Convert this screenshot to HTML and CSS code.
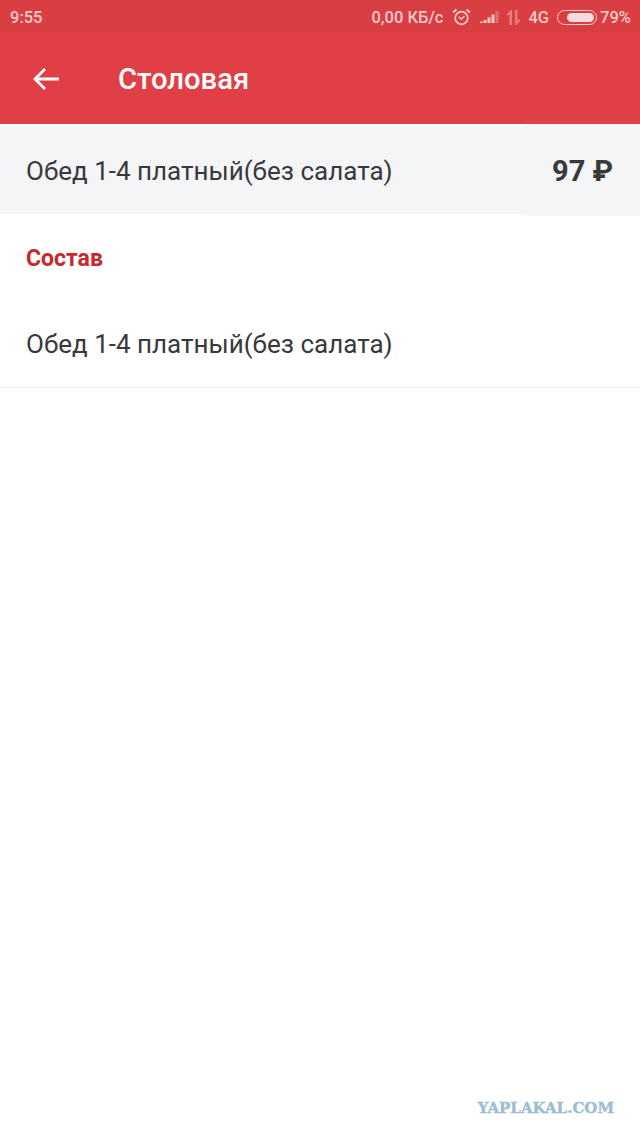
FILE: index.html
```html
<!DOCTYPE html>
<html lang="ru">

<head>
    <meta charset="UTF-8">
    <title>Столовая</title>
    <link rel="stylesheet" href="styles.css">
</head>

<body>

    <div class="status-bar">
        <span class="status-time">9:55</span>
        <div class="status-right">
            <span class="status-text">0,00 КБ/с</span>
            <svg class="icon-alarm" width="19" height="18" viewBox="0 0 19 18" fill="none" stroke="currentColor">
                <circle cx="9.5" cy="10" r="6.300" stroke-width="1.7" />
                <path d="M6.800 8.800 9.500 11 12.500 8" stroke-width="1.500" />
                <path d="M1 4.500 4.500 1.500M18 4.500 14.500 1.500" stroke-width="2" />
            </svg>
            <svg class="icon-signal" width="20" height="14" viewBox="0 0 20 14" fill="currentColor">
                <path d="M0 11.500h2.500V13H0Z" />
                <path d="M3.500 10h3v3h-3Z" />
                <path d="M7.500 7.500h3V13h-3Z" />
                <path d="M11.500 4.500h3V13h-3Z" />
                <path d="M15.500 1h3v12h-3Z" opacity="0.35" />
            </svg>
            <svg class="icon-data" width="15" height="17" viewBox="0 0 15 17" fill="currentColor" opacity="0.45">
                <path d="M3.500 16V5L1 7.500V5L5 1H6V16Z" />
                <path d="M9 1H11.500V12L14 9.500V12L10 16H9Z" />
            </svg>
            <span class="status-text status-network">4G</span>
            <div class="battery">
                <div class="battery-level"></div>
            </div>
            <span class="status-text">79%</span>
        </div>
    </div>

    <header class="toolbar">
        <svg class="icon-back" width="28" height="24" viewBox="0 0 28 24" fill="none" stroke="currentColor" stroke-width="2.800">
            <path d="M27 12H3M13 2 3 12l10 10" />
        </svg>
        <h1 class="toolbar-title">Столовая</h1>
    </header>

    <div class="item-head">
        <span class="item-name">Обед 1-4 платный(без салата)</span>
        <span class="item-price">97 ₽</span>
    </div>

    <h2 class="section-title">Состав</h2>

    <div class="item-row">Обед 1-4 платный(без салата)</div>

    <div class="watermark">YAPLAKAL.COM</div>

</body>

</html>
```

FILE: styles.css
```css
* {
    box-sizing: border-box;
}

html,
body {
    height: 100%;
}

body {
    margin: 0;
    background: #fff;
    color: #38393b;
    font-family: Roboto, "Noto Sans", sans-serif;
    display: flex;
    flex-direction: column;
}

.status-bar {
    height: 32px;
    padding: 2px 9px 0 10px;
    background: #d93e43;
    color: #f6c9ca;
    display: flex;
    justify-content: space-between;
    align-items: center;
    font-size: 16.500px;
    font-weight: 500;
}

.status-right {
    display: flex;
    align-items: center;
}

.icon-alarm {
    margin-left: 9px;
}

.icon-signal {
    margin-left: 9px;
}

.icon-data {
    margin-left: 6px;
}

.status-network {
    margin-left: 7px;
}

.battery {
    width: 40px;
    height: 15px;
    margin: 0 3px 0 8px;
    padding: 2px;
    border: 1.500px solid #f6c9ca;
    border-radius: 8px;
}

.battery-level {
    width: 79%;
    height: 100%;
    margin-left: auto;
    background: #f6dcdd;
    border-radius: 5px;
}

.toolbar {
    height: 92px;
    padding: 2px 0 0 32px;
    background: #e03f45;
    color: #fff;
    display: flex;
    align-items: center;
}

.toolbar-title {
    margin: 0 0 0 58px;
    font-size: 29.200px;
    font-weight: 500;
}

.item-head {
    height: 92px;
    display: flex;
}

.item-name {
    flex: 1;
    margin: 2px 0;
    padding-left: 26px;
    background: #f4f5f7;
    font-size: 26px;
    line-height: 90px;
}

.item-price {
    width: 114px;
    padding-left: 26px;
    background: #f4f5f7;
    font-size: 29px;
    font-weight: 700;
    line-height: 94px;
}

.section-title {
    margin: 0;
    padding: 28px 26px 0;
    color: #c62a2a;
    font-size: 23px;
    font-weight: 700;
    line-height: 30px;
}

.item-row {
    height: 114px;
    padding: 49px 26px 0;
    font-size: 26px;
    line-height: 42px;
    border-bottom: 1px solid #f1f1f1;
}

.watermark {
    margin-top: auto;
    padding: 0 26px 21px 0;
    color: #9dbdd3;
    font-family: "DejaVu Serif", serif;
    font-size: 15px;
    font-weight: 700;
    text-align: right;
    -webkit-text-stroke: 0.400px #9dbdd3;
}
```
